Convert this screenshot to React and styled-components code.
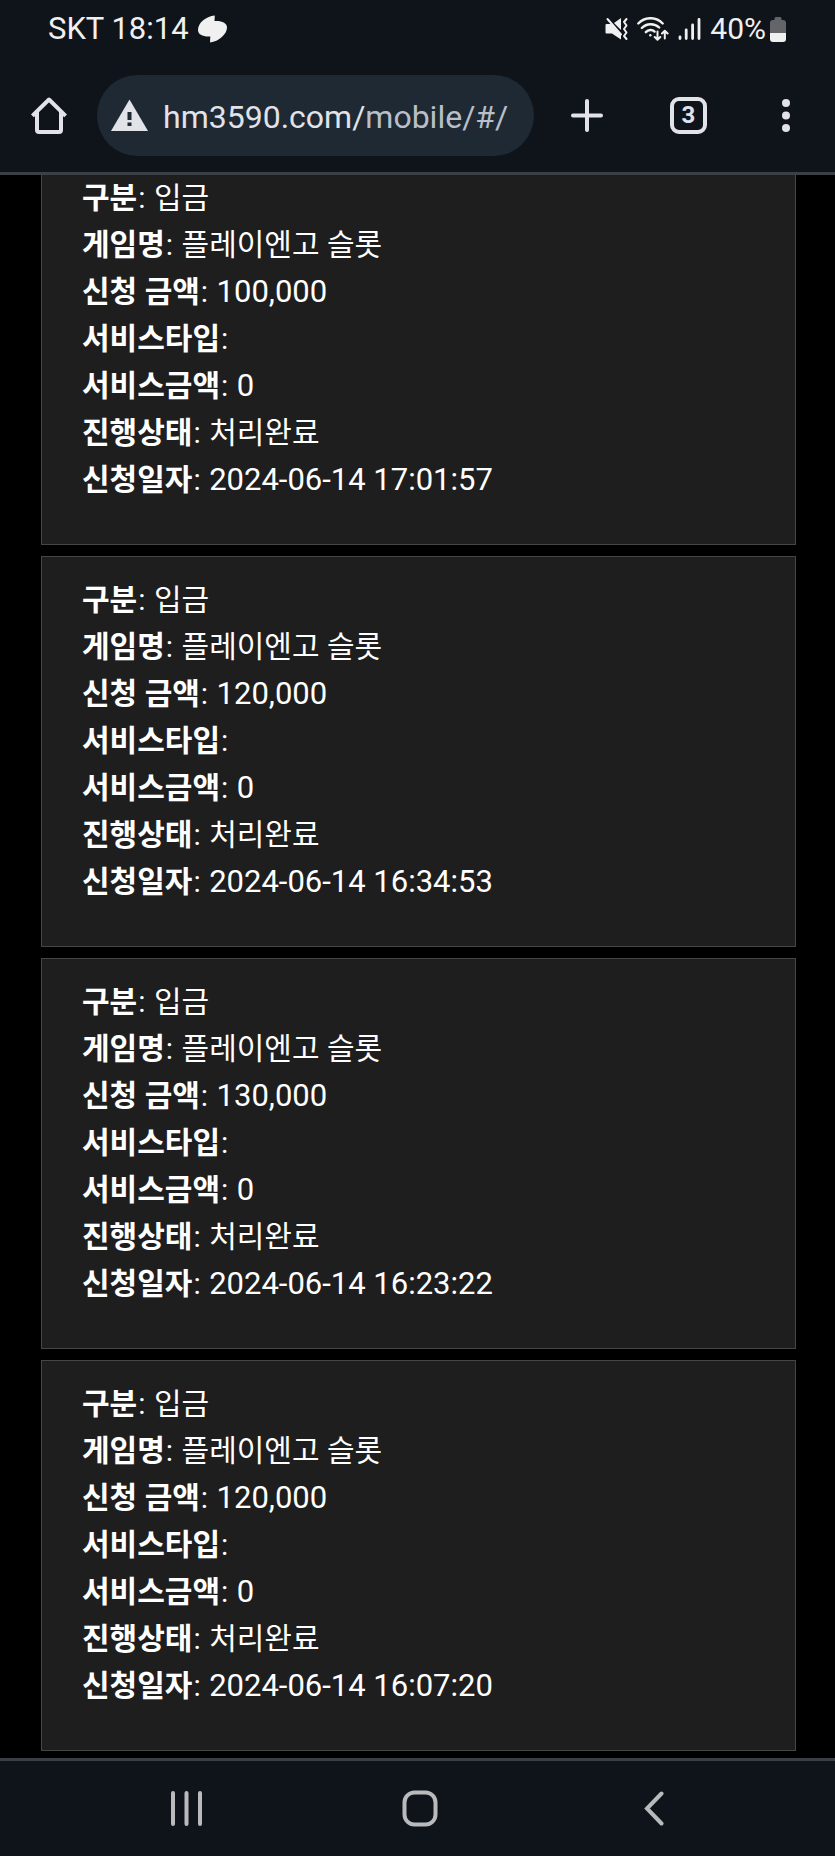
import React from "react";
import styled, { createGlobalStyle } from "styled-components";

const GlobalStyle = createGlobalStyle`
  * {
    box-sizing: border-box;
  }

  body {
    margin: 0;
    background: #000;
    color: #fff;
    font-family: Roboto, "Noto Sans CJK KR", sans-serif;
  }

  button {
    display: flex;
    align-items: center;
    justify-content: center;
    padding: 0;
    border: 0;
    background: none;
    color: inherit;
    font-family: inherit;
    cursor: pointer;
  }

  svg {
    display: block;
    flex: none;
  }
`;

const Page = styled.div`
  display: flex;
  flex-direction: column;
  min-height: 100vh;
`;

const Header = styled.header`
  background: #0f141b;
  border-bottom: 3px solid #3b4046;
`;

const StatusBar = styled.div`
  display: flex;
  align-items: center;
  justify-content: space-between;
  height: 58px;
  padding: 0 49px 0 48px;
  color: #f0f0f0;
  font-size: 30px;
  line-height: 36px;
`;

const StatusGroup = styled.div`
  display: flex;
  align-items: center;
  gap: ${(props) => props.$gap}px;
`;

const Clock = styled.span`
  font-size: 31px;
`;

const Toolbar = styled.div`
  display: flex;
  align-items: center;
  height: 114px;
  padding: 0 37px 0 31px;
  color: #e2e2e9;
`;

const AddressBar = styled.div`
  display: flex;
  align-items: center;
  flex: 1;
  min-width: 0;
  height: 81px;
  margin: 0 37px 0 30px;
  padding: 0 14px;
  gap: 15px;
  border-radius: 41px;
  background: #1e2933;
`;

const Url = styled.div`
  overflow: hidden;
  padding-top: 3px;
  color: #b8bfc8;
  font-size: 32px;
  line-height: 40px;
  white-space: nowrap;

  strong {
    color: #e2e2e9;
    font-weight: 400;
  }
`;

const Actions = styled.div`
  display: flex;
  align-items: center;
  gap: 67px;
`;

const TabsButton = styled.button`
  width: 37px;
  height: 37px;

  && {
    border: 4px solid #e2e2e9;
    border-radius: 9px;
    font-size: 24px;
    font-weight: 700;
    line-height: 28px;
  }
`;

const MenuButton = styled.button`
  width: 24px;
`;

const List = styled.main`
  display: flex;
  flex: 1;
  flex-direction: column;
  gap: 11px;
  padding: 0 39px 7px 41px;
`;

const Card = styled.dl`
  margin: 0;
  padding: ${(props) => (props.$cut ? "0" : "20px")} 40px 40px;
  border: 1px solid #464646;
  border-top-width: ${(props) => (props.$cut ? "0" : "1px")};
  background: #1e1e1e;
`;

const Row = styled.div`
  display: flex;
  height: 47px;
  font-size: 30px;
  line-height: 45px;
  white-space: pre;
`;

const Label = styled.dt`
  font-weight: 700;

  span {
    padding: 0 1px;
    font-weight: 400;
  }
`;

const Value = styled.dd`
  margin: 0;
  font-size: ${(props) => (props.$numeric ? "31px" : "30px")};
`;

const NavBar = styled.nav`
  display: grid;
  grid-template-columns: repeat(3, 1fr);
  justify-items: center;
  align-items: center;
  height: 98px;
  padding: 0 64px 0 70px;
  border-top: 3px solid #3b4046;
  background: #0f141b;
  color: #b9babc;
`;

const records = [
  { amount: "100,000", date: "2024-06-14 17:01:57" },
  { amount: "120,000", date: "2024-06-14 16:34:53" },
  { amount: "130,000", date: "2024-06-14 16:23:22" },
  { amount: "120,000", date: "2024-06-14 16:07:20" },
];

const Field = ({ label, value, numeric }) => (
  <Row>
    <Label>
      {label}
      <span>: </span>
    </Label>
    <Value $numeric={numeric}>{value}</Value>
  </Row>
);

const Record = ({ record, cut }) => (
  <Card $cut={cut}>
    <Field label="구분" value="입금" />
    <Field label="게임명" value="플레이엔고 슬롯" />
    <Field label="신청 금액" value={record.amount} numeric />
    <Field label="서비스타입" value="" />
    <Field label="서비스금액" value="0" numeric />
    <Field label="진행상태" value="처리완료" />
    <Field label="신청일자" value={record.date} numeric />
  </Card>
);

const CarrierIcon = () => (
  <svg width="29" height="28" viewBox="0 0 29 28" fill="currentColor">
    <path d="M16.8 0.5 L16.5 6 C24 5.5 29 8 29 12.5 C29 19 21 26.5 12 27.5 L12.3 21.5 C5 22 0 19.5 0 15 C0 8 7.5 1.5 16.8 0.5 Z" />
  </svg>
);

const MuteIcon = () => (
  <svg width="23" height="24" viewBox="0 0 23 24" fill="none">
    <path d="M1.5 7 H6 L16 18 V22.5 L7 16.5 H1.5 Q0.5 16.5 0.5 15.5 V8 Q0.5 7 1.5 7 Z" fill="currentColor" />
    <path d="M9 6 L16 1 V13 Z" fill="currentColor" />
    <path d="M2.5 2 L16 17.5" stroke="currentColor" strokeWidth="2" strokeLinecap="round" />
    <path d="M21.5 2 L19 5 L21.5 8.5 L19 12 L21.5 15.5 L19 19 L21.5 22" stroke="currentColor" strokeWidth="2" strokeLinecap="round" strokeLinejoin="round" />
  </svg>
);

const WifiIcon = () => (
  <svg width="32" height="24" viewBox="0 0 32 24" fill="none" stroke="currentColor" strokeWidth="2.4" strokeLinecap="round" strokeLinejoin="round">
    <path d="M1.3 6.5 C8 -0.6 19 -0.6 25.7 6.5" />
    <path d="M4.8 11 C9.5 6 17.5 6 22.2 10.5" />
    <path d="M8.8 15.2 C11.5 12.4 15.3 12.4 17.6 14.6" />
    <circle cx="13.3" cy="18.3" r="1.2" fill="currentColor" stroke="none" />
    <path d="M20.5 14.5 V22.5 M17.7 20 L20.5 22.8 L23.3 20" strokeWidth="2" />
    <path d="M27.8 21.5 V14 M25 16.5 L27.8 13.7 L30.6 16.5" strokeWidth="2" />
  </svg>
);

const SignalIcon = () => (
  <svg width="23" height="24" viewBox="0 0 23 24" stroke="currentColor" strokeWidth="2.8" strokeLinecap="round">
    <path d="M2 20 V21.5 M8.2 13 V21.5 M14.6 8 V21.5 M21 2.5 V21.5" />
  </svg>
);

const BatteryIcon = () => (
  <svg width="16" height="25" viewBox="0 0 16 25">
    <path d="M4.5 3 V1.5 Q4.5 0 6 0 H10 Q11.5 0 11.5 1.5 V3 H13 Q16 3 16 6 V16 H0 V6 Q0 3 3 3 Z" fill="#636569" />
    <path d="M0 16 H16 V22 Q16 25 13 25 H3 Q0 25 0 22 Z" fill="currentColor" />
  </svg>
);

const HomeIcon = () => (
  <svg width="36" height="37" viewBox="0 0 36 37" fill="none" stroke="currentColor" strokeWidth="4" strokeLinecap="square" strokeLinejoin="round">
    <path d="M2.8 17.5 L18 2.5 L33.2 17.5" />
    <path d="M6 16 V33 Q6 35 8 35 H28 Q30 35 30 33 V16" />
  </svg>
);

const WarningIcon = () => (
  <svg width="37" height="32" viewBox="0 0 37 32">
    <path d="M18.5 0.5 L37 32 H0 Z" fill="currentColor" />
    <path d="M16.5 13 H20.5 V21 H16.5 Z M16.5 23.5 H20.5 V27 H16.5 Z" fill="#1e2933" />
  </svg>
);

const PlusIcon = () => (
  <svg width="32" height="33" viewBox="0 0 32 33" stroke="currentColor" strokeWidth="4" strokeLinecap="round">
    <path d="M2 16.5 H30 M16 2 V31" />
  </svg>
);

const DotsIcon = () => (
  <svg width="8" height="33" viewBox="0 0 8 33" fill="currentColor">
    <circle cx="4" cy="4" r="4" />
    <circle cx="4" cy="16.5" r="4" />
    <circle cx="4" cy="29" r="4" />
  </svg>
);

const App = () => {
  return (
    <Page>
      <GlobalStyle />
      <Header>
        <StatusBar>
          <StatusGroup $gap={9}>
            <Clock>SKT 18:14</Clock>
            <CarrierIcon />
          </StatusGroup>
          <StatusGroup $gap={9}>
            <MuteIcon />
            <WifiIcon />
            <SignalIcon />
            <StatusGroup $gap={4}>
              <span>40%</span>
              <BatteryIcon />
            </StatusGroup>
          </StatusGroup>
        </StatusBar>
        <Toolbar>
          <button aria-label="홈">
            <HomeIcon />
          </button>
          <AddressBar>
            <WarningIcon />
            <Url>
              <strong>hm3590.com/</strong>mobile/#/
            </Url>
          </AddressBar>
          <Actions>
            <button aria-label="새 탭">
              <PlusIcon />
            </button>
            <TabsButton>3</TabsButton>
            <MenuButton aria-label="메뉴">
              <DotsIcon />
            </MenuButton>
          </Actions>
        </Toolbar>
      </Header>

      <List>
        {records.map((record, index) => (
          <Record key={record.date} record={record} cut={index === 0} />
        ))}
      </List>

      <NavBar>
        <button aria-label="최근 앱">
          <svg width="33" height="35" viewBox="0 0 33 35" stroke="currentColor" strokeWidth="4" strokeLinecap="round">
            <path d="M3 2 V33 M16.5 2 V33 M30 2 V33" />
          </svg>
        </button>
        <button aria-label="홈 화면">
          <svg width="36" height="37" viewBox="0 0 36 37" fill="none" stroke="currentColor" strokeWidth="4">
            <rect x="2.5" y="2.5" width="31" height="32" rx="10" />
          </svg>
        </button>
        <button aria-label="뒤로">
          <svg width="20" height="35" viewBox="0 0 20 35" fill="none" stroke="currentColor" strokeWidth="4" strokeLinecap="round">
            <path d="M17.5 2.5 L3 17.5 L17.5 32.5" />
          </svg>
        </button>
      </NavBar>
    </Page>
  );
};

export default App;
